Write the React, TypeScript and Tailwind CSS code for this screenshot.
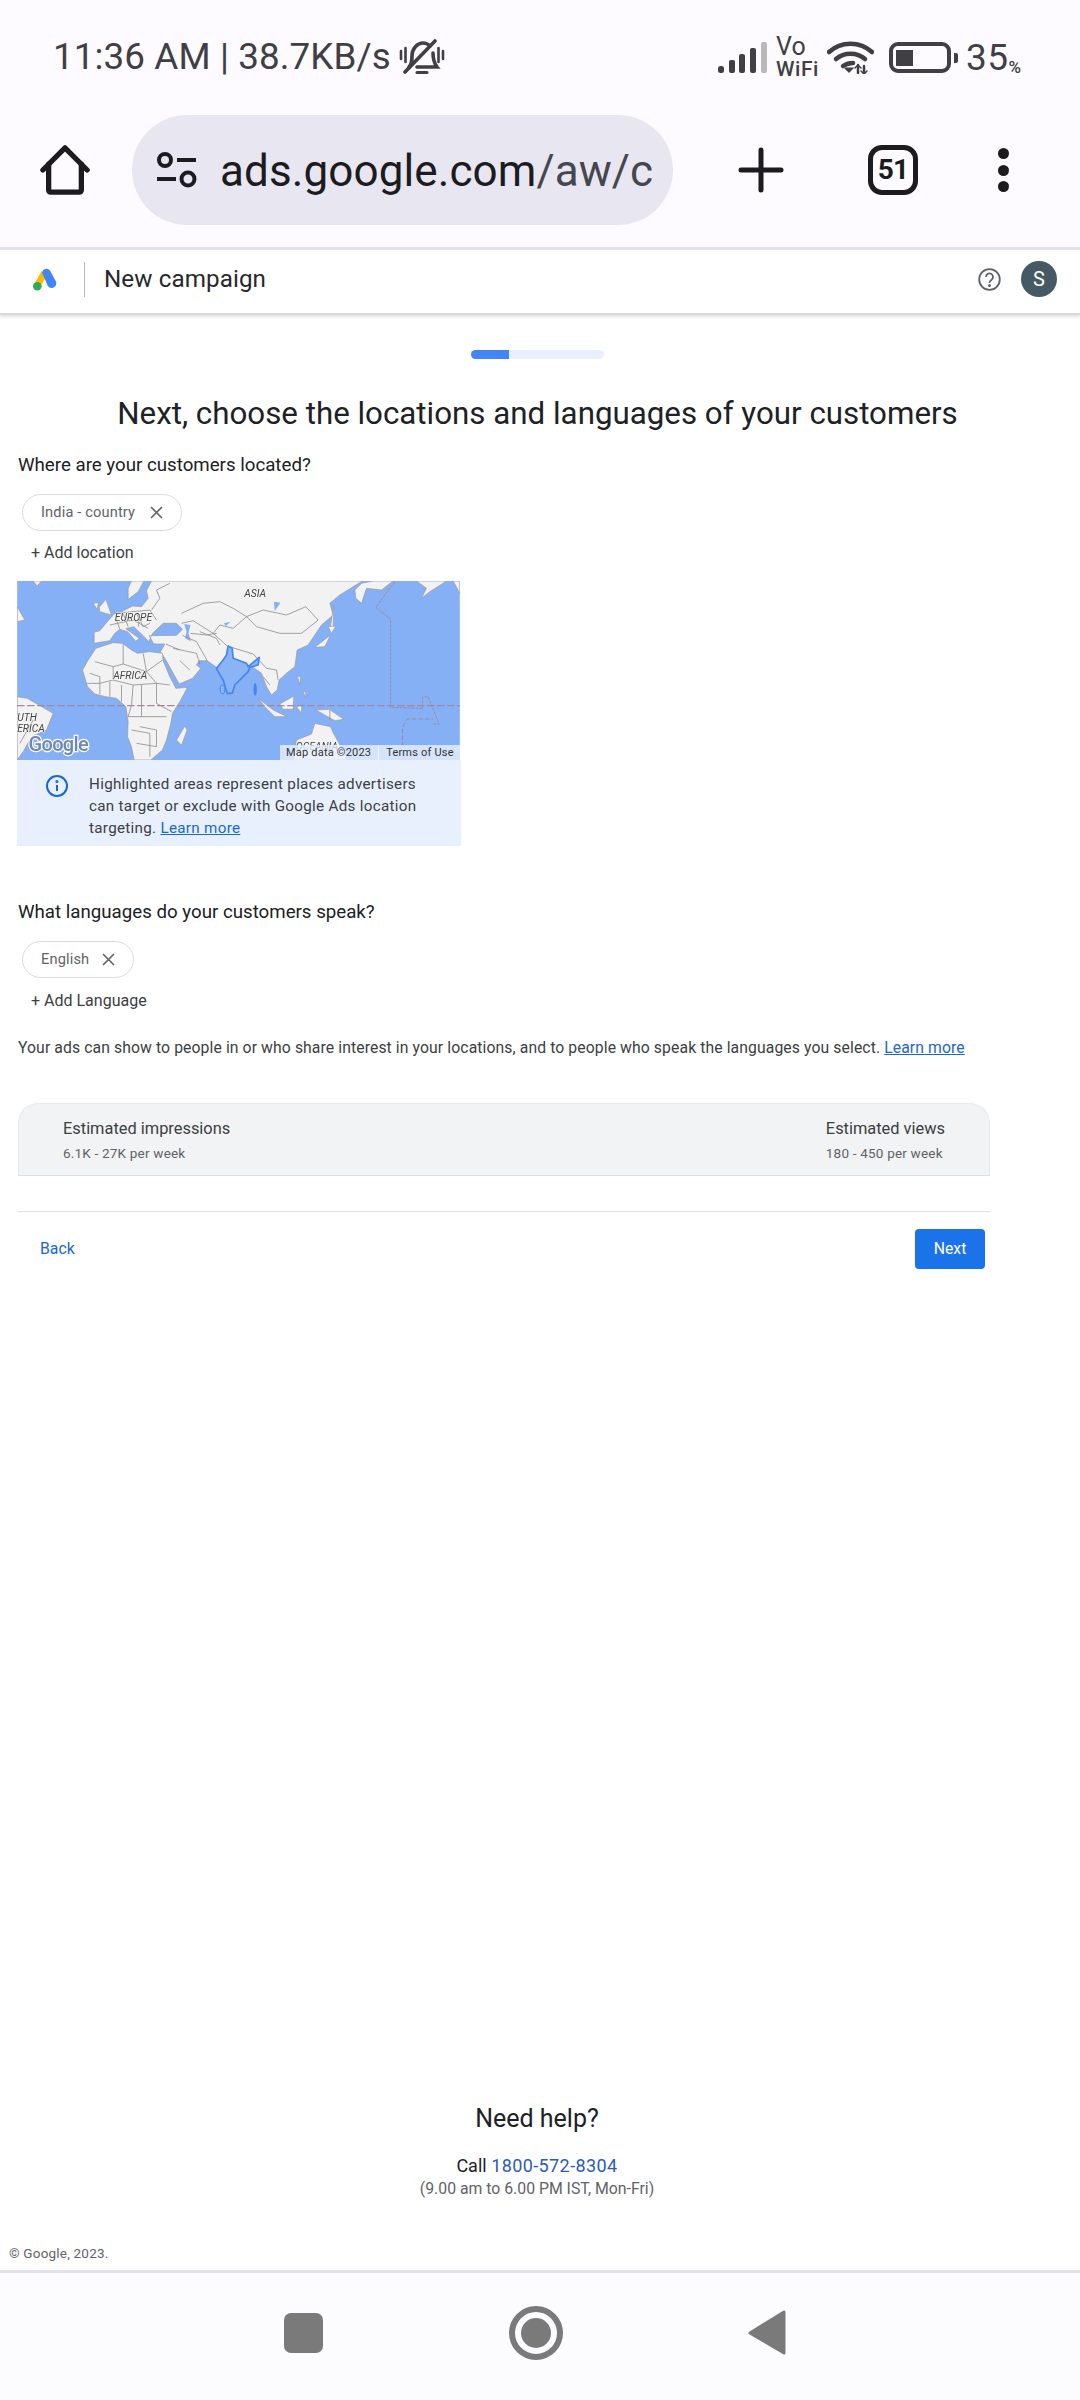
import React from "react";

const land: string[] = [
  // Eurasia
  "455,33 1088,33 1060,50 1020,75 990,100 1000,135 965,165 945,195 925,225 892,240 885,290 860,310 838,330 832,360 815,375 800,350 785,310 760,292 745,300 690,370 650,292 622,272 598,272 590,285 603,295 578,325 538,342 498,270 482,245 495,222 462,222 448,197 530,196 548,178 530,160 490,160 458,190 447,215 430,197 402,170 378,176 418,205 408,214 383,185 360,178 345,190 330,212 283,220 283,187 300,182 325,152 345,130 365,125 398,108 425,110 445,85 440,62",
  // Africa
  "248,300 262,275 288,235 340,218 368,220 395,240 413,250 450,245 488,250 490,272 510,320 528,355 563,352 540,395 518,430 513,460 500,510 488,540 453,570 403,570 395,530 383,500 385,455 378,410 350,385 318,380 285,372 263,350",
  // Kamchatka & Okhotsk
  "1065,60 1085,40 1120,33 1180,33 1145,60 1100,55 1085,100 1068,85",
  "1002,105 1000,170 990,180",
  "1250,33 1340,33 1290,65 1265,85 1280,55",
  "1360,33 1380,33 1380,70",
  // Scandinavia / Greenland etc
  "395,33 432,33 415,65 385,88 385,55",
  "100,33 125,33 112,48",
  "52,110 75,150 52,155",
  "298,112 318,88 335,135 300,125",
  "280,100 296,98 292,118",
  // SE Asia
  "775,385 820,420 862,440 825,440 795,410",
  "840,402 882,378 880,418 850,418",
  "890,410 905,405 905,430",
  "893,318 902,320 900,345",
  "908,362 918,368 918,382",
  "948,420 988,418 1032,448 1005,452",
  "945,232 992,195 975,230",
  "985,170 1008,168 995,190",
  // Australia
  "880,570 890,510 935,492 945,460 992,470 1002,492 1040,560 1040,570",
  // South America
  "52,380 82,385 160,430 140,480 95,500 70,545 52,570",
  // Madagascar
  "530,510 555,468 562,480 545,526",
  "705,368 712,372 708,378",
];

const water: string[] = [
  "553,162 572,165 566,190 573,214 556,205 560,185",
  "822,95 842,98 825,122",
  "672,160 692,155 678,168",
];

const borders: string[] = [
  "545,130 610,100 660,95 700,115 740,140 790,120 860,135 918,110 955,150 905,190 840,190 770,170 740,140",
  "545,160 580,152 640,190 682,228 760,252 800,295",
  "548,196 590,215 622,272",
  "600,185 650,205 660,225",
  "572,190 620,195 650,190",
  "640,190 660,165 700,175 740,140",
  "520,235 590,250 600,282",
  "498,222 540,240",
  "540,272 570,300",
  "455,120 480,85 470,60 510,40",
  "345,130 400,125 450,120 470,150",
  "370,130 385,170",
  "410,130 430,170 450,160",
  "330,165 400,150 445,175",
  "350,150 360,178",
  "420,140 415,170",
  "800,295 830,300 835,330",
  "790,320 810,345",
  "285,275 340,290 370,282 440,305 488,270",
  "370,222 370,282",
  "430,250 440,305",
  "262,340 300,340 340,330 400,345 470,340 510,345",
  "340,290 340,330",
  "400,345 395,405 385,440 450,440 500,440",
  "470,340 470,400 515,425",
  "420,470 470,480 470,530",
  "410,520 470,530",
  "270,310 300,320 300,372",
  "330,335 330,380",
  "365,345 365,395",
  "440,305 470,340",
  "425,345 425,440",
  "395,480 450,490 450,560",
  "990,420 990,450",
  "100,450 60,520",
];

function WorldMap() {
  return (
    <svg viewBox="52 33 1328 537" className="-ml-px block h-[179px] w-[443px]" style={{ filter: "blur(0.25px)" }}>
      <rect x="52" y="33" width="1328" height="537" fill="#86b0f5" />
      {land.map((p, i) => (
        <polygon key={i} points={p} fill="#f2f2f2" stroke="#989898" strokeWidth="2" strokeLinejoin="round" />
      ))}
      {water.map((p, i) => (
        <polygon key={i} points={p} fill="#86b0f5" />
      ))}
      {borders.map((p, i) => (
        <polyline key={i} points={p} fill="none" stroke="#8c8c8c" strokeWidth="2.4" />
      ))}
      <polygon
        points="685,228 697,235 700,265 740,280 745,290 778,262 775,285 750,292 745,305 705,345 697,370 682,370 670,330 655,305 650,295 670,270 680,255"
        fill="#8ab4f6"
        stroke="#4285f4"
        strokeWidth="5"
        strokeLinejoin="round"
      />
      <ellipse cx="668" cy="358" rx="7" ry="13" fill="#8ab4f6" stroke="#4285f4" strokeWidth="3" />
      <ellipse cx="766" cy="358" rx="5" ry="19" fill="#4285f4" />
      <g fill="none" stroke="#a4879f" strokeWidth="4">
        <line x1="52" y1="407" x2="1380" y2="407" strokeDasharray="22 8" />
        <polyline points="1185,35 1128,112 1172,147 1172,412 1268,415 1268,382 1285,380 1318,462 1298,462" strokeDasharray="9 3" strokeWidth="3" />
        <polyline points="1208,570 1208,472 1222,447 1300,447" strokeDasharray="14 6" strokeWidth="3" />
      </g>
      <g fontFamily="Roboto, sans-serif" fontStyle="italic" fontSize="31" fill="#444" stroke="#f6f6f6" strokeWidth="3" style={{ paintOrder: "stroke" }}>
        <text x="733" y="80">ASIA</text>
        <text x="345" y="153">EUROPE</text>
        <text x="340" y="326">AFRICA</text>
        <text x="52" y="454">UTH</text>
        <text x="52" y="485">ERICA</text>
        <text x="888" y="540">OCEANIA</text>
      </g>
      <text x="86" y="543" fontFamily="Roboto, sans-serif" fontWeight="500" fontSize="60" letterSpacing="-2" fill="#6e87b5" stroke="#ffffff" strokeWidth="7" style={{ paintOrder: "stroke" }}>Google</text>
    </svg>
  );
}

function CloseX() {
  return (
    <svg width="13" height="13" viewBox="0 0 13 13" className="shrink-0">
      <path d="M1 1 12 12M12 1 1 12" stroke="#5f6368" strokeWidth="1.6" />
    </svg>
  );
}

function Chip({ label, gap }: { label: string; gap: string }) {
  return (
    <div className={`ml-[4px] inline-flex h-[37px] items-center rounded-[19px] border border-[#dadce0] pl-[18px] pr-[18px] text-[14.6px] text-[#5f6368] tracking-[0.15px] ${gap}`}>
      <span>{label}</span>
      <CloseX />
    </div>
  );
}

function StatusBar() {
  return (
    <div className="flex h-[115px] items-center justify-between pl-[53px] pr-[59px] text-[#404044]">
      <div className="flex items-center">
        <span className="text-[36.8px] font-[450] leading-none tracking-[0.1px]">11:36 AM | 38.7KB/s</span>
        <svg width="46" height="38" viewBox="0 0 46 38" className="ml-[8px]" fill="none" stroke="#404044" strokeWidth="3.6" strokeLinecap="round">
          <path d="M10 28c3-3 3-6 3-11 0-7 5-13 11-13 3 0 5 1 7 3" />
          <path d="M34 14c0 6 1 10 4 14H18" />
          <path d="M6 33 36 2" />
          <path d="M2 12v8M6.500 9v14M39.500 9v14M44 12v8" strokeWidth="2.6" />
          <path d="M18 33.500h10" strokeWidth="3" />
        </svg>
      </div>
      <div className="flex items-center">
        <svg width="49" height="31" viewBox="0 0 49 31" fill="#404044">
          <rect x="0" y="24" width="6" height="7" rx="2.500" />
          <rect x="11" y="18" width="6" height="13" rx="2" />
          <rect x="21" y="12" width="6" height="19" rx="2" />
          <rect x="32" y="6" width="6" height="25" rx="2" />
          <rect x="43" y="0" width="6" height="31" rx="2" fill="#b9b9b9" />
        </svg>
        <div className="ml-[9px] flex w-[42px] flex-col font-medium">
          <span className="text-[25px] font-normal leading-[20px] tracking-[0.3px]">Vo</span>
          <span className="mt-[2px] text-[21px] leading-[20px] tracking-[0.6px]">WiFi</span>
        </div>
        <svg width="47" height="33" viewBox="0 0 47 33" className="ml-[9px]" fill="none" stroke="#404044" strokeWidth="4.500" strokeLinecap="round">
          <path d="M2 11C14 0 33 0 45 11" />
          <path d="M9 18c8-7 21-7 29 0" />
          <path d="M16 25c3-2 6-3 10-3" />
          <path d="M19 27.500h6l-3 3z" fill="#404044" strokeWidth="2" />
          <path d="M31 24v8M37 33v-8" strokeWidth="2.500" />
          <path d="M28 27l3-3 3 3M34 30l3 3 3-3" strokeWidth="1.500" />
        </svg>
        <div className="ml-[15px] flex items-center">
          <div className="flex h-[31px] w-[62px] items-center rounded-[9px] border-[4px] border-[#404044] pl-[3px]">
            <div className="h-[16px] w-[17px] bg-[#404044]" />
          </div>
          <div className="ml-[3px] h-[10px] w-[4px] rounded-r-[2px] bg-[#404044]" />
        </div>
        <span className="ml-[8px] text-[37px] leading-none tracking-[0.5px]">35</span>
        <span className="mb-[3px] self-end text-[17px] font-medium leading-none">%</span>
      </div>
    </div>
  );
}

function Toolbar() {
  return (
    <div className="flex h-[132px] items-start">
      <div className="flex h-[110px] w-[132px] items-center justify-center pr-[2px]">
        <svg width="50" height="50" viewBox="0 0 52 52" fill="none" stroke="#1c1b20" strokeWidth="5.5" strokeLinejoin="round" strokeLinecap="round">
          <path d="M3 26 26 3l23 23" />
          <path d="M9 20v27a2 2 0 0 0 2 2h30a2 2 0 0 0 2-2V20" />
        </svg>
      </div>
      <div className="flex h-[110px] w-[541px] items-center overflow-hidden rounded-[55px] bg-[#e8e7f1] pl-[24px]">
        <svg width="42" height="36" viewBox="0 0 42 36" fill="none" stroke="#1c1b20" strokeWidth="4" className="shrink-0">
          <circle cx="9" cy="8" r="6" />
          <path d="M21 8h19M1 27h19" />
          <circle cx="32" cy="27" r="6.500" />
        </svg>
        <span className="ml-[22px] mt-[2px] whitespace-nowrap text-[44px] leading-none tracking-[0.1px] text-[#1c1b20]">
          ads.google.com<span className="text-[#46464f]">/aw/c</span>
        </span>
      </div>
      <div className="flex h-[110px] items-center pl-[65px]">
        <svg width="46" height="46" viewBox="0 0 46 46" stroke="#1c1b20" strokeWidth="5" strokeLinecap="round">
          <path d="M23 3v40M3 23h40" />
        </svg>
        <div className="ml-[84px] flex h-[50px] w-[50px] items-center justify-center rounded-[14px] border-[5px] border-[#1c1b20] text-[28px] font-bold leading-none tracking-[-0.8px] text-[#1c1b20]">
          51
        </div>
        <div className="ml-[80px] flex flex-col gap-[5.500px]">
          <div className="h-[11px] w-[11px] rounded-full bg-[#1c1b20]" />
          <div className="h-[11px] w-[11px] rounded-full bg-[#1c1b20]" />
          <div className="h-[11px] w-[11px] rounded-full bg-[#1c1b20]" />
        </div>
      </div>
    </div>
  );
}

function Header() {
  return (
    <div className="relative flex h-[65px] items-center justify-between border-b-2 border-[#d9d9d9] bg-white pb-[5px] pl-[33px] pr-[23px] shadow-[0_2px_3px_rgba(0,0,0,0.12)]">
      <div className="flex items-center">
        <svg width="24" height="23" viewBox="0 0 24 23">
          <path d="M8.500 3 1.500 16 7 19.500 14 7z" fill="#fbbc04" />
          <path d="M9 4.500a4.500 4.500 0 0 1 7.800-2.300l6 11a4.700 4.700 0 0 1-8 4.800z" fill="#4285f4" />
          <circle cx="4.300" cy="18.300" r="4.300" fill="#34a853" />
        </svg>
        <div className="ml-[27px] h-[35px] w-px bg-[#b8b8b8]" />
        <span className="ml-[19px] text-[24.2px] leading-none tracking-[0.1px] text-[#27282b]">New campaign</span>
      </div>
      <div className="flex items-center">
        <svg width="23" height="23" viewBox="0 0 23 23" fill="none" stroke="#5f6368" strokeWidth="1.800">
          <circle cx="11.500" cy="11.500" r="10.300" />
          <path d="M8 9a3.500 3.500 0 1 1 5.500 2.800c-1.200.9-2 1.400-2 3" />
          <circle cx="11.500" cy="17.500" r="0.600" fill="#5f6368" />
        </svg>
        <div className="ml-[20px] flex h-[36px] w-[36px] items-center justify-center rounded-full bg-[#455a64] text-[20px] leading-none text-white">
          S
        </div>
      </div>
    </div>
  );
}

function Row({ className, children }: { className: string; children: React.ReactNode }) {
  return <div className={`flex h-[24px] items-center whitespace-nowrap ${className}`}>{children}</div>;
}

export default function App() {
  return (
    <div className="flex h-[2400px] w-[1080px] flex-col overflow-hidden bg-white font-['Roboto',sans-serif]">
      <div className="bg-[#fdfbff]">
        <StatusBar />
        <Toolbar />
      </div>
      <div className="h-[3px] bg-[#e3e2ec]" />
      <Header />

      <div className="flex flex-1 flex-col">
        <div className="mx-auto mt-[35px] flex h-[9px] w-[133px] translate-x-[-3px] overflow-hidden rounded-[5px] bg-[#e8f0fe]">
          <div className="h-full w-[38px] bg-[#4285f4]" />
        </div>
        <h1 className="mt-[35px] flex h-[40px] translate-x-[-2.500px] items-center justify-center whitespace-nowrap text-[31.3px] font-normal text-[#202124]">
          Next, choose the locations and languages of your customers
        </h1>

        <div className="w-[990px] pl-[18px]">
          <Row className="mt-[19px] text-[18.7px] font-[450] text-[#202124]">Where are your customers located?</Row>
          <div className="mt-[17px]">
            <Chip label="India - country" gap="gap-[15px]" />
          </div>
          <Row className="mt-[10px] pl-[13px] text-[16px] font-[450] text-[#3c4043]">+ Add location</Row>

          <div className="mt-[16px] w-[443px]">
            <div className="relative h-[179px]">
              <WorldMap />
              <div className="absolute bottom-0 right-[1px] flex h-[15px] w-[180px] items-center bg-[#e8f0fe]/80 pl-[6px] text-[11px] leading-none tracking-[0.2px] text-[#333]">
                <span>Map data ©2023</span>
                <span className="mx-[7px] h-full w-px bg-[#f5f5f5]" />
                <span>Terms of Use</span>
              </div>
            </div>
            <div className="-ml-px flex h-[86px] items-start bg-[#e8f0fe] pl-[29px] pt-[13px]">
              <svg width="22" height="22" viewBox="0 0 22 22" fill="none" stroke="#1967d2" strokeWidth="2" className="mt-[2px] shrink-0">
                <circle cx="11" cy="11" r="10" />
                <path d="M11 10v6" />
                <circle cx="11" cy="6.500" r="0.600" fill="#1967d2" />
              </svg>
              <p className="ml-[21px] whitespace-nowrap text-[15.200px] leading-[22px] tracking-[0.3px] text-[#3c4043]">
                Highlighted areas represent places advertisers
                <br />
                can target or exclude with Google Ads location
                <br />
                targeting. <a className="text-[#1967d2] underline">Learn more</a>
              </p>
            </div>
          </div>

          <Row className="mt-[54px] text-[18.7px] font-[450] text-[#202124]">What languages do your customers speak?</Row>
          <div className="mt-[17px]">
            <Chip label="English" gap="gap-[13px]" />
          </div>
          <Row className="mt-[11px] pl-[13px] text-[16px] font-[450] text-[#3c4043]">+ Add Language</Row>
          <Row className="mt-[23px] text-[15.74px] tracking-[0.1px] text-[#3c4043]">
            Your ads can show to people in or who share interest in your locations, and to people who speak the languages you select.&nbsp;
            <a className="text-[#1967d2] underline">Learn more</a>
          </Row>

          <div className="mt-[43px] flex h-[73px] items-start justify-between rounded-t-[20px] border border-[#e8eaed] border-b-[#dadce0] bg-[#f1f3f4] pl-[44px] pr-[44px] pt-[13px]">
            <div>
              <div className="h-[24px] text-[16.4px] font-[450] leading-[24px] text-[#3c4043]">Estimated impressions</div>
              <div className="h-[24px] text-[13.5px] leading-[24px] tracking-[0.2px] text-[#5f6368]">6.1K - 27K per week</div>
            </div>
            <div>
              <div className="h-[24px] text-[16.4px] font-[450] leading-[24px] text-[#3c4043]">Estimated views</div>
              <div className="h-[24px] text-[13.5px] leading-[24px] tracking-[0.2px] text-[#5f6368]">180 - 450 per week</div>
            </div>
          </div>

          <div className="mt-[35px] h-[1px] bg-[#e0e2e5]" />
          <div className="mt-[17px] flex items-center justify-between pl-[22px] pr-[5px]">
            <span className="text-[15.800px] font-[450] text-[#1967d2]">Back</span>
            <div className="flex h-[40px] w-[70px] items-center justify-center rounded-[4px] bg-[#1a73e8] text-[15.800px] font-[450] text-white">
              Next
            </div>
          </div>
        </div>

        <div className="mt-auto">
          <div className="flex h-[36px] translate-x-[-3px] items-center justify-center text-[25px] text-[#202124]">Need help?</div>
          <div className="mt-[16px] flex h-[24px] translate-x-[-3px] items-center justify-center text-[18px] font-[450] text-[#202124]">
            Call&nbsp;<span className="font-normal tracking-[0.4px] text-[#2a5bb8]">1800-572-8304</span>
          </div>
          <div className="mt-[1px] flex h-[22px] translate-x-[-3px] items-center justify-center text-[15.800px] text-[#5f6368]">
            (9.00 am to 6.00 PM IST, Mon-Fri)
          </div>
          <div className="mt-[43px] box-content flex h-[20px] items-center pb-[7px] pl-[9px] text-[13.5px] tracking-[0.2px] text-[#5f6368]">
            © Google, 2023.
          </div>
        </div>
      </div>

      <div className="h-[3px] bg-[#e3e2ec]" />
      <div className="flex h-[127px] items-center justify-center bg-[#fcfbfe] pb-[8px] pr-[10px]">
        <div className="h-[40px] w-[39px] rounded-[7px] bg-[#7a7a7a]" />
        <div className="ml-[186px] flex h-[54px] w-[54px] items-center justify-center rounded-full border-[6px] border-[#7a7a7a]">
          <div className="h-[30px] w-[30px] rounded-full bg-[#7a7a7a]" />
        </div>
        <svg width="38" height="47" viewBox="0 0 38 47" className="ml-[185px]">
          <path d="M36 3v41L2 24z" fill="#7a7a7a" stroke="#7a7a7a" strokeWidth="3" strokeLinejoin="round" />
        </svg>
      </div>
    </div>
  );
}
